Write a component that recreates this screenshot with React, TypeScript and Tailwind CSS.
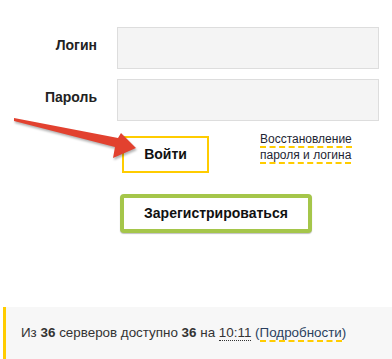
const Field = ({ label }: { label: string }) => (
  <div className="flex items-center">
    <span className="w-[97px] pb-[5px] text-right text-[14px] font-bold text-[#222]">{label}</span>
    <div className="ml-[20px] h-[42px] w-[262px] border border-[#dddddd] bg-[#f4f4f4]" />
  </div>
)

const Arrow = () => (
  <svg
    className="absolute left-0 top-0"
    width="160"
    height="170"
    viewBox="0 0 160 170"
    style={{ filter: 'drop-shadow(1px 2px 1px rgba(0,0,0,0.3))' }}
  >
    <polygon
      points="14,118 118,138 121,133 136,148 113,158 115,147 14,121"
      fill="#e2412f"
    />
  </svg>
)

export default function App() {
  return (
    <div className="relative h-[359px] w-[392px] overflow-hidden bg-white font-['Liberation_Sans',Arial,sans-serif] text-[#333]">
      <div className="flex flex-col gap-[10px] pt-[27px]">
        <Field label="Логин" />
        <Field label="Пароль" />
      </div>

      <div className="mt-[10px] flex items-start">
        <button className="ml-[122px] mt-[5px] h-[37px] w-[87px] border-2 border-[#ffcc00] bg-white text-[14px] font-bold text-[#111]">
          Войти
        </button>
        <a className="ml-[51px] w-[100px] text-[12px] leading-[16px] text-[#1e2533]">
          <span className="border-b-2 border-dashed border-[#ffcc00]">Восстановление пароля и логина</span>
        </a>
      </div>

      <button className="ml-[120px] mt-[21px] h-[39px] w-[192px] rounded-[4px] border-4 border-[#a5c64a] bg-white text-[14px] font-bold text-[#111] shadow-[0_1px_1px_rgba(0,0,0,0.25)]">
        Зарегистрироваться
      </button>

      <div className="ml-[3px] mt-[74px] border-l-[3px] border-[#ffcc00] bg-[#f7f7f7] pb-[24px] pl-[15px] pt-[16px] text-[13.4px] leading-[20px] text-[#333]">
        Из <b>36</b> серверов доступно <b>36</b> на{' '}
        <span className="border-b border-dotted border-[#333]">10:11</span>{' '}
        <span className="text-[#2a3f5f]">
          (<span className="border-b-2 border-dashed border-[#ffcc00]">Подробности</span>)
        </span>
      </div>

      <Arrow />
    </div>
  )
}
